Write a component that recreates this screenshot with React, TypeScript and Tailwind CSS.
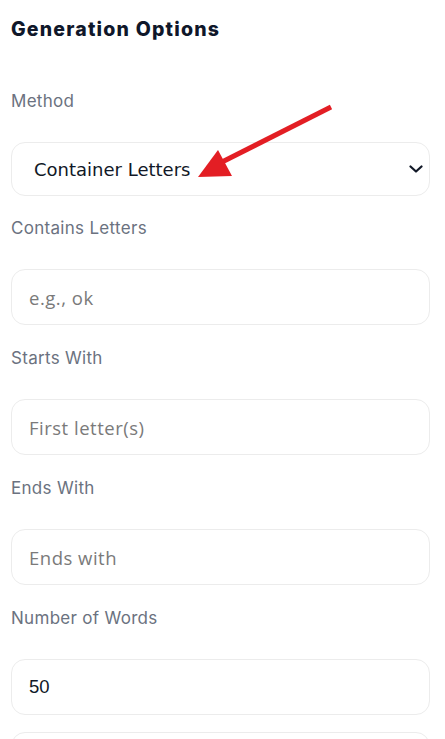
import React from "react";

function Label({ children }: { children: React.ReactNode }) {
  return (
    <div className="text-[17px] leading-[24px] tracking-[0.3px] text-[#6b7280]" style={{ fontFamily: "Inter, 'Open Sans', sans-serif" }}>
      {children}
    </div>
  );
}

function TextInput({ placeholder, value }: { placeholder?: string; value?: string }) {
  return (
    <input
      readOnly
      defaultValue={value}
      placeholder={placeholder}
      className={
        value
          ? "mt-[29px] block h-[56px] w-full rounded-[14px] border border-[#ececec] bg-white pl-[17px] text-[18.5px] text-[#111827] outline-none"
          : "mt-[29px] block h-[56px] w-full rounded-[14px] border border-[#ececec] bg-white pl-[17px] text-[18.5px] tracking-[0.5px] text-[#111827] placeholder:text-[#7a7a7a] outline-none"
      }
      style={{ fontFamily: value ? "'Liberation Sans', Arial, sans-serif" : "'Open Sans', Inter, sans-serif" }}
    />
  );
}

export default function App() {
  return (
    <div className="relative min-h-[739px] w-[445px] overflow-hidden bg-white">
      <div className="pl-[11px] pr-[15px] pt-[15px]">
        <h2
          className="text-[19.5px] font-extrabold leading-[28px] tracking-[1.2px] text-[#0f172a]"
          style={{ fontFamily: "Inter, 'Noto Sans', sans-serif" }}
        >
          Generation Options
        </h2>

        <div className="mt-[46px]">
          <Label>Method</Label>
          <div className="relative mt-[29px] flex h-[54px] w-full items-center rounded-[14px] border border-[#ececec] bg-white pl-[22px]">
            <span className="text-[18px] text-[#111827]" style={{ fontFamily: "'DejaVu Sans', Verdana, sans-serif" }}>
              Container Letters
            </span>
            <svg className="absolute right-[6px] top-[22px]" width="14" height="9" viewBox="0 0 14 9" fill="none">
              <path d="M1.5 1.5 L7 6.5 L12.5 1.5" stroke="#111827" strokeWidth="2.2" strokeLinecap="round" strokeLinejoin="round" />
            </svg>
          </div>
        </div>

        <div className="mt-[20px]">
          <Label>Contains Letters</Label>
          <TextInput placeholder="e.g., ok" />
        </div>

        <div className="mt-[21px]">
          <Label>Starts With</Label>
          <TextInput placeholder="First letter(s)" />
        </div>

        <div className="mt-[21px]">
          <Label>Ends With</Label>
          <TextInput placeholder="Ends with" />
        </div>

        <div className="mt-[21px]">
          <Label>Number of Words</Label>
          <TextInput value="50" />
        </div>

        <div className="mt-[17px] h-[56px] w-full rounded-[14px] border border-[#ececec] bg-white" />
      </div>

      <svg className="pointer-events-none absolute left-0 top-0" width="445" height="739" viewBox="0 0 445 739">
        <line x1="331" y1="107" x2="222" y2="162" stroke="#e31e24" strokeWidth="5" />
        <polygon points="198,177 218,150 232,176" fill="#e31e24" />
      </svg>
    </div>
  );
}
